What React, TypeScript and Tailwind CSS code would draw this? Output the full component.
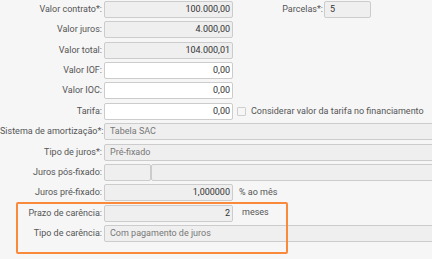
import React from "react";

const font = { fontFamily: "Roboto, 'Liberation Sans', sans-serif" };

function Label({ children }: { children: React.ReactNode }) {
  return (
    <div className="w-[104px] shrink-0 text-right pr-[2px] text-[9px] leading-[17px] text-[#555555] whitespace-nowrap">
      {children}
    </div>
  );
}

function Field({
  value = "",
  w = "w-[129px]",
  white = false,
  right = true,
  muted = false,
}: {
  value?: string;
  w?: string;
  white?: boolean;
  right?: boolean;
  muted?: boolean;
}) {
  return (
    <div
      className={`${w} h-[17px] shrink-0 rounded-[2px] border border-[#cccccc] ${
        white ? "bg-white" : "bg-[#efefef]"
      } ${right ? "text-right pr-[2px]" : "text-left pl-[5px]"} ${
        muted ? "text-[#777777]" : "text-[#333333]"
      } text-[9px] leading-[15px] whitespace-nowrap overflow-hidden`}
    >
      {value}
    </div>
  );
}

function Row({ children }: { children: React.ReactNode }) {
  return <div className="flex items-center h-[17px]">{children}</div>;
}

export default function App() {
  return (
    <div
      className="relative w-[432px] h-[259px] overflow-hidden bg-[#f6f6f6]"
      style={font}
    >
      <div className="flex flex-col gap-[3.36px] pt-[1px]">
        <Row>
          <Label>Valor contrato*:</Label>
          <Field value="100.000,00" />
          <div className="w-[91px] shrink-0 text-right pr-[1px] text-[9px] text-[#555555]">
            Parcelas*:
          </div>
          <Field value="5" w="w-[47px]" right={false} />
        </Row>
        <Row>
          <Label>Valor juros:</Label>
          <Field value="4.000,00" />
        </Row>
        <Row>
          <Label>Valor total:</Label>
          <Field value="104.000,01" />
        </Row>
        <Row>
          <Label>Valor IOF:</Label>
          <Field value="0,00" white />
        </Row>
        <Row>
          <Label>Valor IOC:</Label>
          <Field value="0,00" white />
        </Row>
        <Row>
          <Label>Tarifa:</Label>
          <Field value="0,00" white />
          <div className="ml-[4px] w-[9px] h-[9px] rounded-[1px] border border-[#cfcfcf] bg-[#f6f6f6]" />
          <div className="ml-[5px] text-[9px] text-[#555555] whitespace-nowrap">
            Considerar valor da tarifa no financiamento
          </div>
        </Row>
        <Row>
          <Label>Sistema de amortização*:</Label>
          <Field value="Tabela SAC" w="w-[340px]" right={false} muted />
        </Row>
        <Row>
          <Label>Tipo de juros*:</Label>
          <Field value="Pré-fixado" w="w-[340px]" right={false} muted />
        </Row>
        <Row>
          <Label>Juros pós-fixado:</Label>
          <Field w="w-[47px]" />
          <div className="w-[1px]" />
          <Field w="w-[300px]" />
        </Row>
        <Row>
          <Label>Juros pré-fixado:</Label>
          <Field value="1,000000" />
          <div className="ml-[6px] text-[9px] text-[#555555] whitespace-nowrap">
            % ao mês
          </div>
        </Row>
        <Row>
          <Label>Prazo de carência:</Label>
          <Field value="2" />
          <div className="ml-[9px] text-[9px] text-[#555555] whitespace-nowrap">
            meses
          </div>
        </Row>
        <Row>
          <Label>Tipo de carência:</Label>
          <Field
            value="Com pagamento de juros"
            w="w-[340px]"
            right={false}
            muted
          />
        </Row>
      </div>
      <div className="absolute left-[16px] top-[202px] w-[272px] h-[52px] rounded-[2px] border-2 border-[#f98a3c] pointer-events-none" />
    </div>
  );
}
